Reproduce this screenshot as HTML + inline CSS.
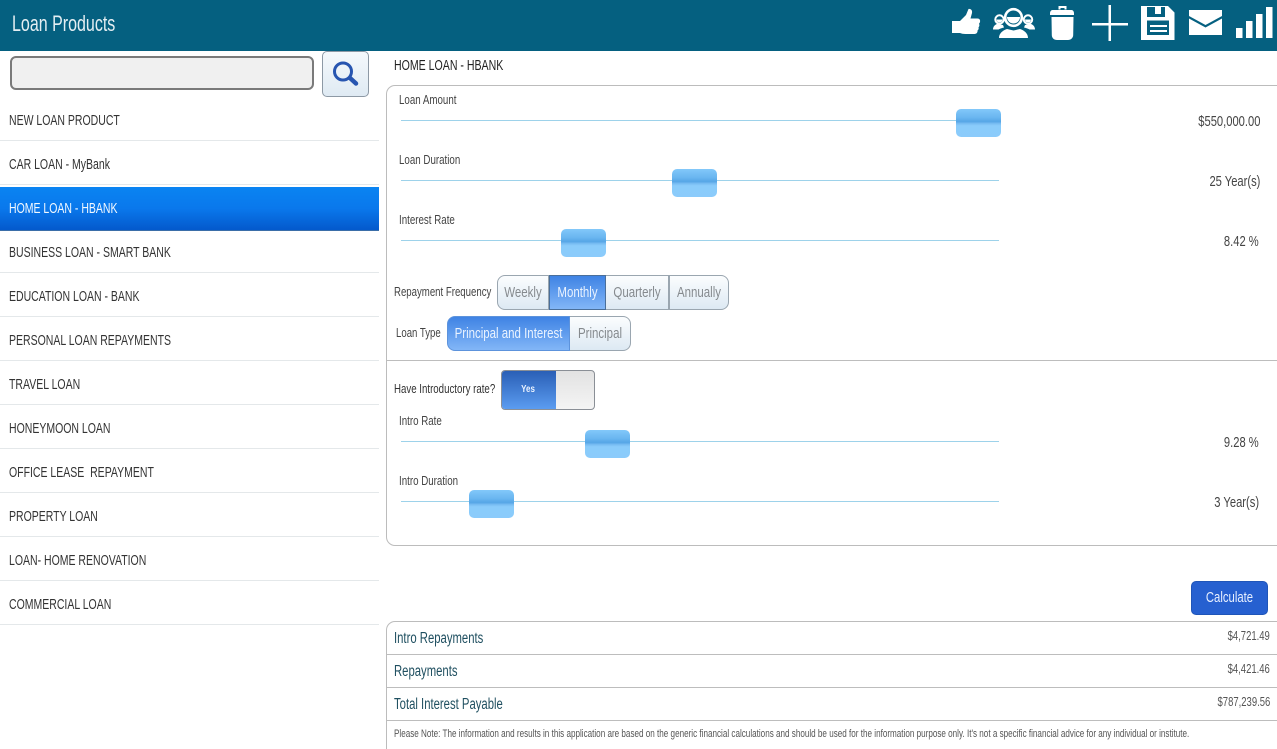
<!DOCTYPE html>
<html><head><meta charset="utf-8"><title>Loan Products</title>
<style>
html,body{margin:0;padding:0;width:1277px;height:749px;overflow:hidden;background:#fff}
body{position:relative;font-family:"Liberation Sans",sans-serif;color:#333}
.t{position:absolute;white-space:nowrap;transform-origin:0 50%;transform:scaleX(.75);line-height:16px}
.r{position:absolute;white-space:nowrap;transform-origin:100% 50%;transform:scaleX(.74);line-height:16px;text-align:right}
.b{position:absolute;box-sizing:border-box}
.hr{position:absolute;left:0;width:379px;height:1px;background:#e4e8ea}
.li{font-size:15px;left:9px;color:#333;transform:scaleX(.70)}
.lab{font-size:13px;color:#444;left:399px;transform:scaleX(.75)}
.val{font-size:15px;color:#444;right:18px;transform:scaleX(.745)}
.line{position:absolute;left:401px;width:598px;height:1px;background:#9dd2ea}
.th{position:absolute;width:45px;height:28px;border-radius:5px;background:linear-gradient(#82c8fa 0,#6ab6f0 30%,#56a6e6 45%,#78bdf3 52%,#8accfb 60%,#8bcbfb 100%)}
.seg{position:absolute;box-sizing:border-box;height:35px;background:linear-gradient(#fbfdfe,#dde9f3);border:1px solid #9aa6b0;color:#858a8e;font-size:15px}
.seg.on{background:linear-gradient(#3f83e4,#82b6f7);color:#eaf3ff;border-color:#4a6f9a}
.seg span{position:absolute;left:-30px;right:-30px;top:9px;text-align:center;line-height:16px;transform:scaleX(.765);white-space:nowrap}
.res{font-size:15.500px;color:#1f4f60;left:394px;transform:scaleX(.73)}
.amt{font-size:13px;color:#555;right:7px;transform:scaleX(.73)}
</style></head><body>

<div class="b" style="left:0;top:0;width:1277px;height:51px;background:#056080"></div>
<div class="t" style="left:12px;top:13px;font-size:22px;line-height:22px;color:#e4eef2;transform:scaleX(.728)">Loan Products</div>

<svg style="position:absolute;left:0;top:0" width="1277" height="51" viewBox="0 0 1277 51">
<g fill="#fff">
<!-- thumb -->
<path d="M952 21h8l6-6 2.500-6c2.500-.500 4 1.500 3.500 4l-1.500 5.500h7c2 0 3 1.600 2.500 3.500-.2.800-.6 1.300-1 1.700.6 1 .6 2.600-.5 3.500.4 1.200.1 2.500-1 3.300.3 1.600-.8 3.500-3 3.500h-9c-2.500 0-4-.500-5.500-1h-8z"/>
<!-- people -->
<circle cx="999.500" cy="19.500" r="4.200" fill="none" stroke="#fff" stroke-width="2"/>
<path d="M996.500 19.500h6a3 3 0 0 1-6 0z"/>
<circle cx="1028" cy="19.500" r="4.200" fill="none" stroke="#fff" stroke-width="2"/>
<path d="M1025 19.500h6a3 3 0 0 1-6 0z"/>
<path d="M993 29.500c0-3 2-5 5-6l2 1 3 .5 1 2.500c-2 .500-4 1-5.500 2z"/>
<path d="M1035 29.500c0-3-2-5-5-6l-2 1-3 .5-1 2.500c2 .500 4 1 5.500 2z"/>
<circle cx="1013.500" cy="17.500" r="8.300" fill="none" stroke="#fff" stroke-width="2.600"/>
<path d="M1007 17h13a6.500 6.500 0 0 1-13 0z"/>
<path d="M999 38c0-4.500 3.500-7.500 8-9l6.500 1.500 6.500-1.500c4.500 1.500 8 4.500 8 9z"/>
<!-- trash -->
<path d="M1058.500 9.500v-3.500h8v3.500h-2v-1.500h-4v1.500z"/>
<path d="M1052.500 10h19c1.500 0 2.500 1.500 2.500 3.500v1.500h-24v-1.500c0-2 1-3.500 2.500-3.500z"/>
<path d="M1051.500 17h22l-.3 18c0 3-2.500 5-5.200 5h-11c-3 0-5.200-2-5.200-5z"/>
<!-- plus -->
<path d="M1092 23h36v2.500h-36zM1108.500 5h2.500v36h-2.500z"/>
<!-- save -->
<path fill-rule="evenodd" d="M1141 6h27l6.500 6.500v27.500h-33.500zM1147 7v10h18v-10zM1147 20.500v14.500h22v-14.500z"/>
<path d="M1155 6h6v8h-6zM1150 25h17v2h-17zM1150 30h17v2h-17z"/>
<!-- mail -->
<path d="M1189 10h33v6l-16.500 9-16.500-9z"/>
<path d="M1189 18.500l16.500 9 16.500-9v16.500h-33z"/>
<!-- bars -->
<rect x="1236" y="28" width="6.500" height="10"/>
<rect x="1246" y="21" width="6.500" height="17"/>
<rect x="1256" y="14" width="6.500" height="24"/>
<rect x="1266" y="7" width="6.500" height="31"/>
</g></svg>

<!-- search -->
<div class="b" style="left:10px;top:56px;width:304px;height:34px;background:#f0f0f0;border:2px solid #7a7a7a;border-radius:6px"></div>
<div class="b" style="left:322px;top:51px;width:47px;height:46px;background:linear-gradient(#f5f9fc,#dfeaf3);border:1px solid #8d99a5;border-radius:5px"></div>
<svg style="position:absolute;left:322px;top:51px" width="47" height="46"><circle cx="21" cy="20.500" r="8.500" fill="none" stroke="#2755b0" stroke-width="3"/><path d="M28 27l6 5.500" stroke="#2755b0" stroke-width="4.500" stroke-linecap="round"/></svg>

<!-- list -->
<div class="t li" style="top:113px">NEW LOAN PRODUCT</div><div class="hr" style="top:140px"></div>
<div class="t li" style="top:157px">CAR LOAN - MyBank</div><div class="hr" style="top:184px"></div>
<div class="b" style="left:0;top:187px;width:379px;height:44px;background:linear-gradient(#0a84f2,#0a78ec 50%,#0459cc);border-bottom:1px solid #3b6ea8"></div>
<div class="t li" style="top:201px;color:#f2f8ff">HOME LOAN - HBANK</div>
<div class="t li" style="top:245px">BUSINESS LOAN - SMART BANK</div><div class="hr" style="top:272px"></div>
<div class="t li" style="top:289px">EDUCATION LOAN - BANK</div><div class="hr" style="top:316px"></div>
<div class="t li" style="top:333px">PERSONAL LOAN REPAYMENTS</div><div class="hr" style="top:360px"></div>
<div class="t li" style="top:377px">TRAVEL LOAN</div><div class="hr" style="top:404px"></div>
<div class="t li" style="top:421px">HONEYMOON LOAN</div><div class="hr" style="top:448px"></div>
<div class="t li" style="top:465px">OFFICE LEASE&nbsp; REPAYMENT</div><div class="hr" style="top:492px"></div>
<div class="t li" style="top:509px">PROPERTY LOAN</div><div class="hr" style="top:536px"></div>
<div class="t li" style="top:553px">LOAN- HOME RENOVATION</div><div class="hr" style="top:580px"></div>
<div class="t li" style="top:597px">COMMERCIAL LOAN</div><div class="hr" style="top:624px"></div>

<!-- heading -->
<div class="t" style="left:394px;top:58px;font-size:15px;color:#222;transform:scaleX(.705)">HOME LOAN - HBANK</div>

<!-- form panel -->
<div class="b" style="left:386px;top:85px;width:900px;height:461px;border:1px solid #bcbcbc;border-radius:9px"></div>

<div class="t lab" style="top:92px">Loan Amount</div>
<div class="line" style="top:120px"></div>
<div class="th" style="left:956px;top:109px"></div>
<div class="r val" style="top:114px;right:17px">$550,000.00</div>

<div class="t lab" style="top:152px">Loan Duration</div>
<div class="line" style="top:180px"></div>
<div class="th" style="left:672px;top:169px"></div>
<div class="r val" style="top:174px;right:17px">25 Year(s)</div>

<div class="t lab" style="top:212px">Interest Rate</div>
<div class="line" style="top:240px"></div>
<div class="th" style="left:561px;top:229px"></div>
<div class="r val" style="top:234px">8.42 %</div>

<div class="t lab" style="left:394px;top:284px;transform:scaleX(.74)">Repayment Frequency</div>
<div class="seg" style="left:497px;top:275px;width:52px;border-radius:8px 0 0 8px"><span>Weekly</span></div>
<div class="seg on" style="left:549px;top:275px;width:57px"><span>Monthly</span></div>
<div class="seg" style="left:606px;top:275px;width:63px;border-left:0"><span>Quarterly</span></div>
<div class="seg" style="left:669px;top:275px;width:60px;border-radius:0 8px 8px 0"><span>Annually</span></div>

<div class="t lab" style="left:396px;top:325px;transform:scaleX(.74)">Loan Type</div>
<div class="seg on" style="left:447px;top:316px;width:123px;border-radius:8px 0 0 8px;border-color:#5d93dc"><span>Principal and Interest</span></div>
<div class="seg" style="left:570px;top:316px;width:61px;border-radius:0 8px 8px 0;border-left:0"><span>Principal</span></div>

<div class="b" style="left:387px;top:360px;width:890px;height:1px;background:#bdbdbd"></div>

<div class="t lab" style="left:394px;top:381px;color:#333;transform:scaleX(.745)">Have Introductory rate?</div>
<div class="b" style="left:501px;top:370px;width:94px;height:40px;border-radius:4px;border:1px solid #8a8f96;overflow:hidden;background:linear-gradient(#e2e2e2,#f4f4f4)">
<div class="b" style="left:0;top:0;width:54px;height:38px;background:linear-gradient(#2a5fb6,#5b9cf0)"></div>
<div class="r" style="left:-1px;width:54px;top:11px;font-size:10px;font-weight:bold;text-align:center;color:#eaf2ff;transform:scaleX(.8);transform-origin:50% 50%">Yes</div>
</div>

<div class="t lab" style="top:413px">Intro Rate</div>
<div class="line" style="top:441px"></div>
<div class="th" style="left:585px;top:430px"></div>
<div class="r val" style="top:435px">9.28 %</div>

<div class="t lab" style="top:473px">Intro Duration</div>
<div class="line" style="top:501px"></div>
<div class="th" style="left:469px;top:490px"></div>
<div class="r val" style="top:495px">3 Year(s)</div>

<!-- calculate -->
<div class="b" style="left:1191px;top:581px;width:77px;height:34px;background:#2660d0;border-radius:5px;border:1px solid #1f55b8"></div>
<div class="r" style="left:1191px;width:77px;top:590px;font-size:15px;text-align:center;color:#e8f0ff;transform:scaleX(.755);transform-origin:50% 50%">Calculate</div>

<!-- results -->
<div class="b" style="left:386px;top:621px;width:900px;height:140px;border:1px solid #bcbcbc;border-radius:9px"></div>
<div class="b" style="left:387px;top:654px;width:890px;height:1px;background:#bdbdbd"></div>
<div class="b" style="left:387px;top:687px;width:890px;height:1px;background:#bdbdbd"></div>
<div class="b" style="left:387px;top:720px;width:890px;height:1px;background:#bdbdbd"></div>
<div class="t res" style="top:631px">Intro Repayments</div>
<div class="t res" style="top:664px">Repayments</div>
<div class="t res" style="top:697px">Total Interest Payable</div>
<div class="r amt" style="top:628px">$4,721.49</div>
<div class="r amt" style="top:661px">$4,421.46</div>
<div class="r amt" style="top:694px">$787,239.56</div>
<div class="t" style="left:394px;top:726px;font-size:11px;color:#555;transform:scaleX(.737)">Please Note: The information and results in this application are based on the generic financial calculations and should be used for the information purpose only. It's not a specific financial advice for any individual or institute.</div>

</body></html>
